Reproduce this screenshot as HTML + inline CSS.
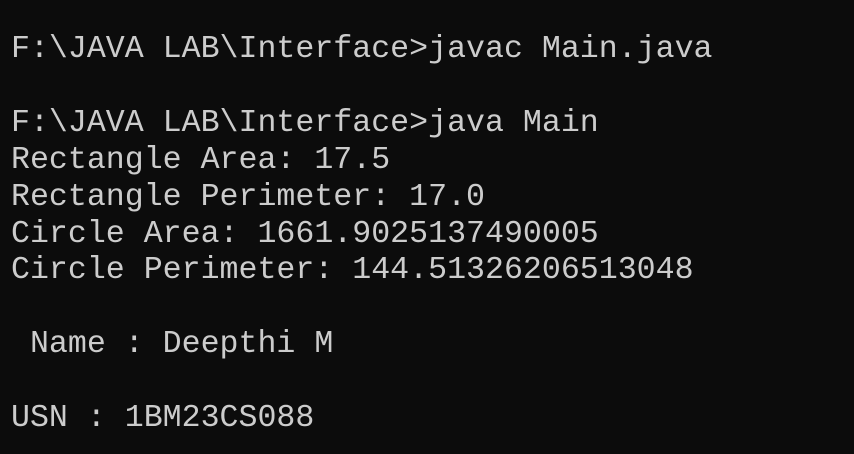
<!DOCTYPE html>
<html><head><style>
html,body{margin:0;padding:0;background:#0c0c0c;width:854px;height:454px;overflow:hidden}
pre{margin:0;position:absolute;left:11px;top:32px;font-family:"Liberation Mono",monospace;font-size:31.6px;line-height:36.9px;color:#cccccc}
</style></head><body><pre>F:\JAVA LAB\Interface>javac Main.java

F:\JAVA LAB\Interface>java Main
Rectangle Area: 17.5
Rectangle Perimeter: 17.0
Circle Area: 1661.9025137490005
Circle Perimeter: 144.51326206513048

 Name : Deepthi M

USN : 1BM23CS088</pre></body></html>
